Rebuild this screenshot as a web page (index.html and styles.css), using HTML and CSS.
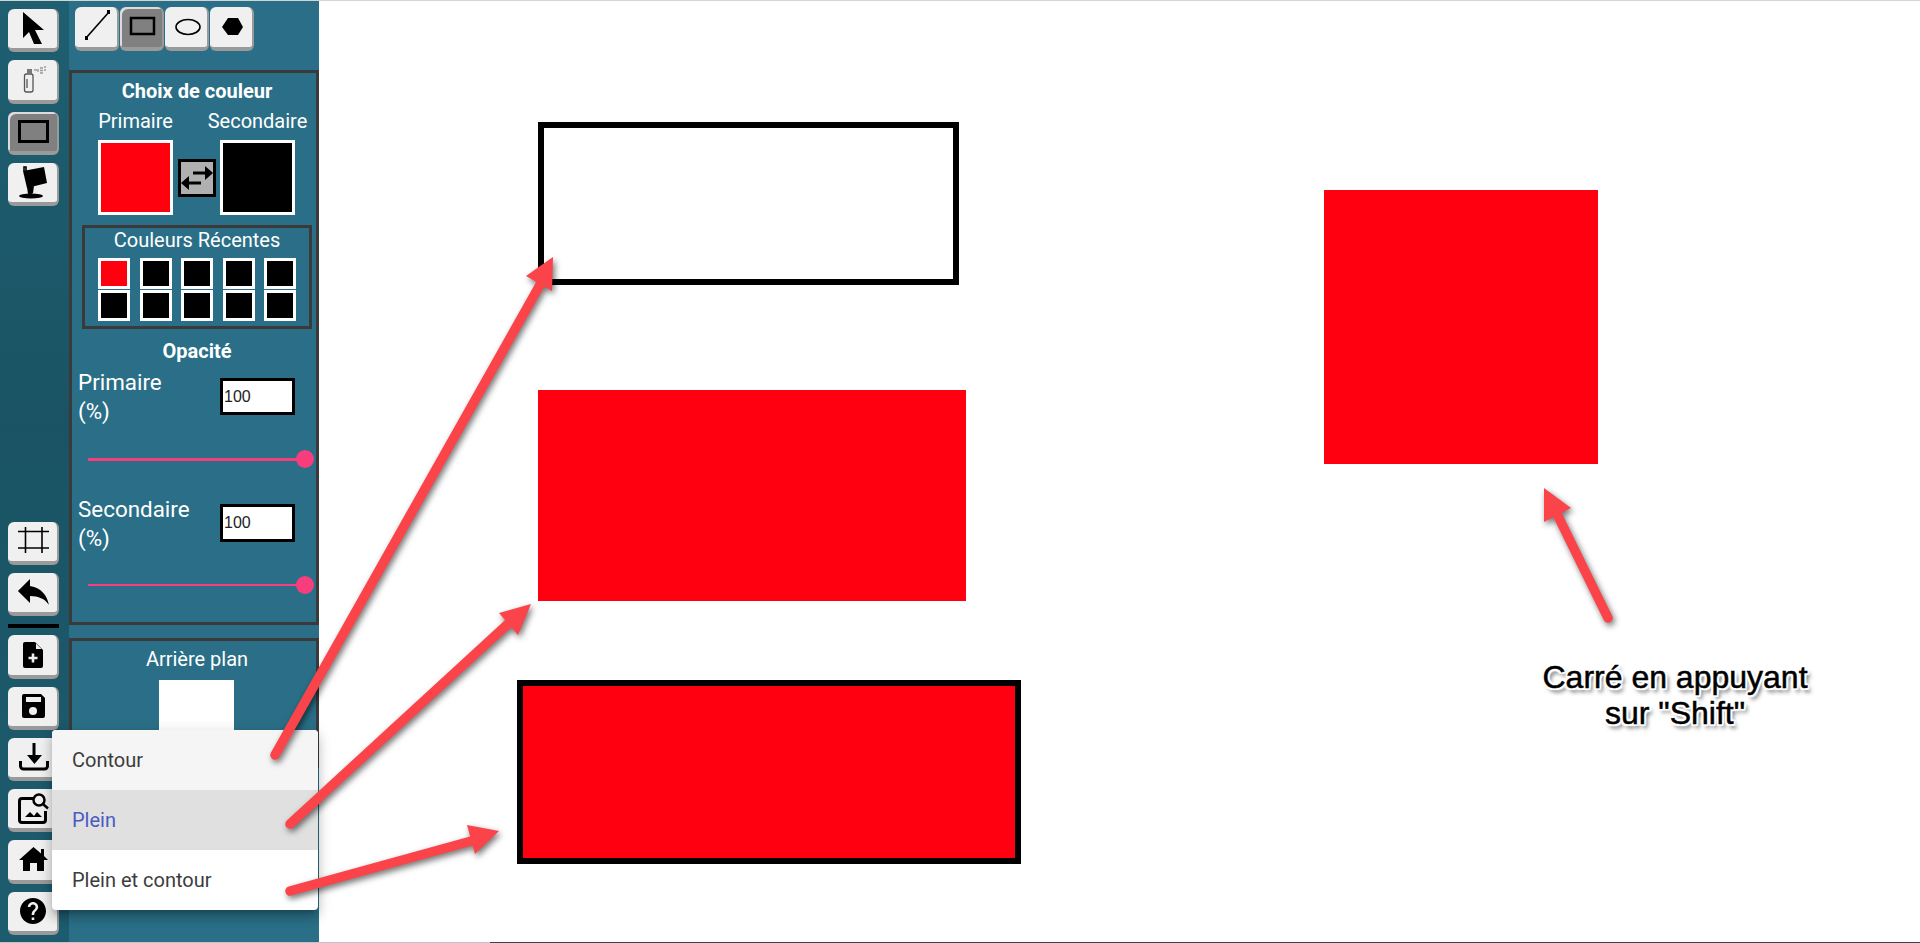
FILE: index.html
```html
<!DOCTYPE html>
<html lang="fr">
<head>
<meta charset="utf-8">
<title>Dessin</title>
<link rel="stylesheet" href="styles.css">
</head>
<body>
<div class="edge-top"></div>
<div class="app">
  <nav class="tools">
    <div class="tool-group">
      <button class="btn"><svg viewBox="0 0 51 40"><polygon points="15,3 36,21 27,21 34,35 26,35 21,23 15,29"/></svg></button>
      <button class="btn"><svg viewBox="0 0 51 40"><rect class="spray" x="16.500" y="14" width="8.500" height="18" rx="2"/><path class="spray" d="M19 19v9"/><rect class="spray-fill" x="19" y="9" width="5" height="5"/><path class="spray-mist" d="M26 10h3M30 9v3M32 8h3M32 10.500h3M32 13h3M36 7h2M36 10h2"/></svg></button>
      <button class="btn btn-on"><svg viewBox="0 0 51 40"><rect class="outline3" x="11.500" y="9.500" width="28" height="20"/></svg></button>
      <button class="btn"><svg viewBox="0 0 51 40"><polygon points="15,8 36,4 39,20 19,25"/><polygon points="19,24 26,23 25,30 23,31 20,31"/><ellipse cx="23" cy="33" rx="12" ry="2.500"/><path class="thin" d="M16 8V4h2v4"/></svg></button>
    </div>
    <div class="tool-group">
      <button class="btn"><svg viewBox="0 0 51 40"><path class="thin" d="M17.500 5v26M34 5v26M10 9.500h31M10 26h31"/></svg></button>
      <button class="btn"><svg viewBox="0 0 51 40"><path transform="translate(4.800,-2.600) scale(1.720)" d="M10 9V5l-7 7 7 7v-4.100c5 0 8.500 1.600 11 5.100-1-5-4-10-11-11z"/></svg></button>
      <div class="sep"></div>
      <button class="btn"><svg viewBox="0 0 51 40"><path d="M17 7h10l8 8v16a2 2 0 0 1-2 2H17a2 2 0 0 1-2-2V9a2 2 0 0 1 2-2z"/><polygon class="white" points="28,8.500 33.500,14 28,14"/><path class="white-line" d="M25 18.500v9M20.500 23h9"/></svg></button>
      <button class="btn"><svg viewBox="0 0 51 40"><path d="M16 7h17l4 4v18a2 2 0 0 1-2 2H16a2 2 0 0 1-2-2V9a2 2 0 0 1 2-2z"/><rect class="white" x="18" y="10" width="15" height="5"/><circle class="white" cx="25" cy="24" r="4"/></svg></button>
      <button class="btn"><svg viewBox="0 0 51 40"><path class="outline3" d="M26 5v15M12.500 23v5a3 3 0 0 0 3 3h21a3 3 0 0 0 3-3v-5"/><polygon points="19,17 34,17 26.500,26"/></svg></button>
      <button class="btn"><svg viewBox="0 0 51 40"><path class="outline3" d="M25 9.500H14a2.500 2.500 0 0 0-2.500 2.500v19a2.500 2.500 0 0 0 2.500 2.500h21a2.500 2.500 0 0 0 2.500-2.500V22"/><circle class="outline25" cx="31" cy="11" r="5.500"/><path class="outline25" d="M35 15l5 4.500"/><polygon points="17,28 22,23 26,27 29,23 34,28"/></svg></button>
      <button class="btn"><svg viewBox="0 0 51 40"><polygon points="25.500,7 33,13.500 33,9 36,9 36,16 40,20 36,20 36,31 29,31 29,23 22,23 22,31 15,31 15,20 11,20"/></svg></button>
      <button class="btn"><svg viewBox="0 0 51 40"><path transform="translate(9.400,3.400) scale(1.300)" d="M12 2C6.480 2 2 6.480 2 12s4.480 10 10 10 10-4.480 10-10S17.520 2 12 2zm1 17h-2v-2h2v2zm2.070-7.750l-.9.920C13.450 12.900 13 13.500 13 15h-2v-.5c0-1.100.45-2.100 1.170-2.830l1.240-1.260c.37-.36.59-.86.59-1.410 0-1.100-.9-2-2-2s-2 .9-2 2H8c0-2.210 1.790-4 4-4s4 1.790 4 4c0 .88-.36 1.680-.93 2.250z"/></svg></button>
    </div>
  </nav>

  <aside class="side">
    <div class="subtools">
      <button class="btn sub"><svg viewBox="0 0 44 40"><path class="thin" d="M11 31L34 5"/><rect x="10" y="29" width="3" height="4"/><rect x="32" y="3" width="3" height="4"/></svg></button>
      <button class="btn sub btn-on"><svg viewBox="0 0 44 40"><rect class="outline25" x="11" y="11" width="23" height="16"/></svg></button>
      <button class="btn sub"><svg viewBox="0 0 44 40"><ellipse class="thin" cx="23" cy="20" rx="12" ry="7.500"/></svg></button>
      <button class="btn sub"><svg viewBox="0 0 44 40"><polygon points="12,20 18,11 28,11 33,20 28,28 18,28"/></svg></button>
    </div>

    <section class="box colors">
      <h2 class="title">Choix de couleur</h2>
      <div class="pair-labels">
        <span class="pair-label">Primaire</span>
        <span class="pair-label">Secondaire</span>
      </div>
      <div class="pair">
        <div class="swatch-big red"></div>
        <div class="swap"><svg viewBox="0 0 32 32"><path class="outline3" d="M12 11h13M7 21h13"/><polygon points="24,4 32,11 24,18"/><polygon points="8,14 0,21 8,28"/></svg></div>
        <div class="swatch-big black"></div>
      </div>
      <div class="recent">
        <div class="recent-title">Couleurs Récentes</div>
        <div class="recent-grid">
          <div class="chip red"></div><div class="chip black"></div><div class="chip black"></div><div class="chip black"></div><div class="chip black"></div>
          <div class="chip black"></div><div class="chip black"></div><div class="chip black"></div><div class="chip black"></div><div class="chip black"></div>
        </div>
      </div>
      <h2 class="title opacity-title">Opacité</h2>
      <div class="op-row">
        <label class="op-label">Primaire (%)</label>
        <input class="op-input" type="text" value="100">
      </div>
      <div class="slider slider-first"><div class="track thick"></div><div class="thumb"></div></div>
      <div class="op-row">
        <label class="op-label">Secondaire (%)</label>
        <input class="op-input op-input-tall" type="text" value="100">
      </div>
      <div class="slider slider-second"><div class="track"></div><div class="thumb"></div></div>
    </section>

    <section class="box bg">
      <div class="bg-title">Arrière plan</div>
      <div class="bg-swatch"></div>
    </section>
  </aside>

  <main class="canvas">
    <div class="shape s-outline"></div>
    <div class="shape s-fill"></div>
    <div class="shape s-both"></div>
    <div class="shape s-square"></div>
    <p class="note">Carré en appuyant<br>sur "Shift"</p>
  </main>
</div>
<div class="edge-bottom"></div>

<ul class="menu">
  <li class="menu-item hover">Contour</li>
  <li class="menu-item selected">Plein</li>
  <li class="menu-item">Plein et contour</li>
</ul>

<svg class="arrows" viewBox="0 0 1920 943">
  <g class="arrow-group">
    <path class="shaft" d="M275 755L541 283"/>
    <polygon class="head" points="553,257 526,276 552,291"/>
    <path class="shaft" d="M290 824L510 622"/>
    <polygon class="head" points="531,604 499,613 518,635"/>
    <path class="shaft" d="M290 891L475 840"/>
    <polygon class="head" points="499,831 467,825 475,854"/>
    <path class="shaft" d="M1608 618L1555 510"/>
    <polygon class="head" points="1544,488 1571,508 1544,522"/>
  </g>
</svg>
</body>
</html>
```
FILE: styles.css
```css
* { box-sizing: border-box; }
html, body { margin: 0; padding: 0; height: 100%; }
body {
  position: relative;
  display: flex;
  flex-direction: column;
  height: 943px;
  overflow: hidden;
  background: #fff;
  font-family: Roboto, "Liberation Sans", sans-serif;
  color: #fff;
}
.edge-top { height: 1px; background: #d4d4d4; flex: none; }
.edge-bottom {
  height: 1px;
  flex: none;
  background: linear-gradient(to right, #c4c4c4 0, #c4c4c4 490px, #444 490px, #444 100%);
}
.app { flex: 1; display: flex; min-height: 0; }

/* left tool column */
.tools {
  width: 69px;
  flex: none;
  display: flex;
  flex-direction: column;
  justify-content: space-between;
  padding: 8px 0 7px 8px;
  background: linear-gradient(to bottom, #1e5f71 0, #1a5464 45%, #1d5c6e 100%);
}
.tool-group { display: flex; flex-direction: column; gap: 8px; }
.sep { height: 4px; width: 51px; background: #000; margin: 0 0 -1px; }
.btn {
  display: block;
  width: 51px;
  height: 43.3px;
  padding: 0;
  border: 0;
  border-right: 2px solid #9a9a9a;
  border-bottom: 4px solid #9a9a9a;
  border-radius: 6px;
  background: #f0f0f0;
  overflow: hidden;
}
.btn svg { display: block; width: 51px; height: 40px; fill: #000; }
.btn-on { background: #808080; box-shadow: inset 2px 2px 0 #dcdcdc; }

/* icon strokes */
.outline3 { fill: none; stroke: #000; stroke-width: 3; }
.outline25 { fill: none; stroke: #000; stroke-width: 2.5; }
.thin { fill: none; stroke: #000; stroke-width: 1.6; }
.white { fill: #f0f0f0; }
.white-line { fill: none; stroke: #f0f0f0; stroke-width: 2.6; }
.spray { fill: none; stroke: #555; stroke-width: 1.3; }
.spray-fill { fill: #777; }
.spray-mist { fill: none; stroke: #999; stroke-width: 1.4; }

/* side panel */
.side { width: 250px; flex: none; background: #2a6f87; }
.subtools { height: 69px; display: flex; gap: 1px; padding: 6px 0 0 6px; }
.sub { width: 44px; height: 44px; }
.sub svg { width: 44px; }

.box { border: 3px solid #3a3a3a; }
.colors { height: 555px; margin-bottom: 13px; }
.bg { height: 130px; }

.title {
  margin: 0;
  padding-left: 6px;
  text-align: center;
  font-size: 20px;
  font-weight: 700;
  line-height: 24px;
}
.colors > .title:first-child { padding-top: 6px; height: 36px; }
.pair-labels { display: flex; padding-left: 26px; gap: 47px; height: 31px; font-size: 20px; line-height: 24px; }
.pair-label { width: 75px; display: flex; justify-content: center; white-space: nowrap; }
.pair { display: flex; align-items: center; padding-left: 26px; }
.swatch-big { width: 75px; height: 75px; border: 3px solid #fff; }
.red { background: #ff000f; }
.black { background: #000; }
.swap { width: 38px; height: 38px; margin: 0 4px 0 5px; border: 3px solid #000; background: #b0b0b0; }
.swap svg { display: block; width: 32px; height: 32px; }

.recent { width: 230px; height: 104px; margin: 10px 0 0 10px; border: 3px solid #3a3a3a; padding: 0 0 0 13px; }
.recent-title { margin-left: -13px; height: 30px; text-align: center; font-size: 20px; line-height: 24px; }
.recent-grid { display: grid; grid-template-columns: repeat(5, 32px); grid-auto-rows: 31px; column-gap: 9.5px; row-gap: 1px; }
.chip { border: 3px solid #fff; }

.opacity-title { margin-top: 10px; }
.op-row { display: flex; padding: 5px 0 0 6px; }
.op-label { display: block; width: 142px; padding-right: 26px; font-size: 22.4px; line-height: 28.5px; }
.op-input {
  width: 75px;
  height: 37px;
  margin-top: 10px;
  padding: 0 1px;
  border: 3px solid #000;
  border-radius: 0;
  background: #fff;
  color: #222;
  font-family: "Liberation Sans", Arial, sans-serif;
  font-size: 16px;
  outline: 0;
}
.op-input-tall { height: 38px; margin-top: 9px; }

.slider { position: relative; height: 18px; margin-left: 16px; width: 217px; }
.slider-first { margin-top: 25px; margin-bottom: 22px; }
.slider-second { margin-top: 24px; }
.track { position: absolute; left: 0; right: 0; top: 8px; height: 2px; background: #f83d7c; }
.track.thick { height: 3px; }
.thumb { position: absolute; right: -9px; top: 0; width: 18px; height: 18px; border-radius: 50%; background: #f83d7c; }

.bg-title { margin-top: 6px; padding-left: 6px; text-align: center; font-size: 20px; line-height: 24px; }
.bg-swatch { width: 75px; height: 75px; margin: 9px 0 0 87px; background: #fff; }

/* drawing area */
.canvas { position: relative; flex: 1; background: #fff; }
.shape { position: absolute; }
.s-outline { left: 219px; top: 121px; width: 421px; height: 163px; border: 6px solid #000; }
.s-fill { left: 219px; top: 389px; width: 428px; height: 211px; background: #ff0010; }
.s-both { left: 198px; top: 679px; width: 504px; height: 184px; border: 6px solid #000; background: #ff0010; }
.s-square { left: 1005px; top: 189px; width: 274px; height: 274px; background: #ff0010; }
.note {
  position: absolute;
  left: 1156px;
  top: 658px;
  width: 400px;
  margin: 0;
  text-align: center;
  color: #000;
  font-family: "Liberation Sans", Arial, sans-serif;
  font-size: 32px;
  line-height: 36px;
  -webkit-text-stroke: .5px #000;
  text-shadow:
    2px 0 1px #fff, -2px 0 1px #fff, 0 2px 1px #fff, 0 -2px 1px #fff,
    2px 2px 1px #fff, -2px -2px 1px #fff, 2px -2px 1px #fff, -2px 2px 1px #fff,
    3px 4px 4px rgba(0, 0, 0, .7);
}

/* dropdown */
.menu {
  position: absolute;
  left: 52px;
  top: 730px;
  width: 266px;
  margin: 0;
  padding: 0;
  list-style: none;
  overflow: hidden;
  border-radius: 4px;
  background: #fff;
  box-shadow: 0 5px 5px -3px rgba(0,0,0,.2), 0 8px 10px 1px rgba(0,0,0,.14), 0 3px 14px 2px rgba(0,0,0,.12);
}
.menu-item { height: 60px; padding-left: 20px; color: #3c3c3c; font-size: 20px; line-height: 60px; }
.menu-item.hover { background: #f5f5f5; }
.menu-item.selected { background: #e0e0e0; color: #4a5bc4; }

/* annotation arrows */
.arrows { position: absolute; left: 0; top: 0; width: 1920px; height: 943px; pointer-events: none; }
.arrow-group { filter: drop-shadow(2px 3px 3px rgba(0, 0, 0, .55)); }
.shaft { fill: none; stroke: #fb4449; stroke-width: 9.5; stroke-linecap: round; }
.head { fill: #fb4449; }
```
